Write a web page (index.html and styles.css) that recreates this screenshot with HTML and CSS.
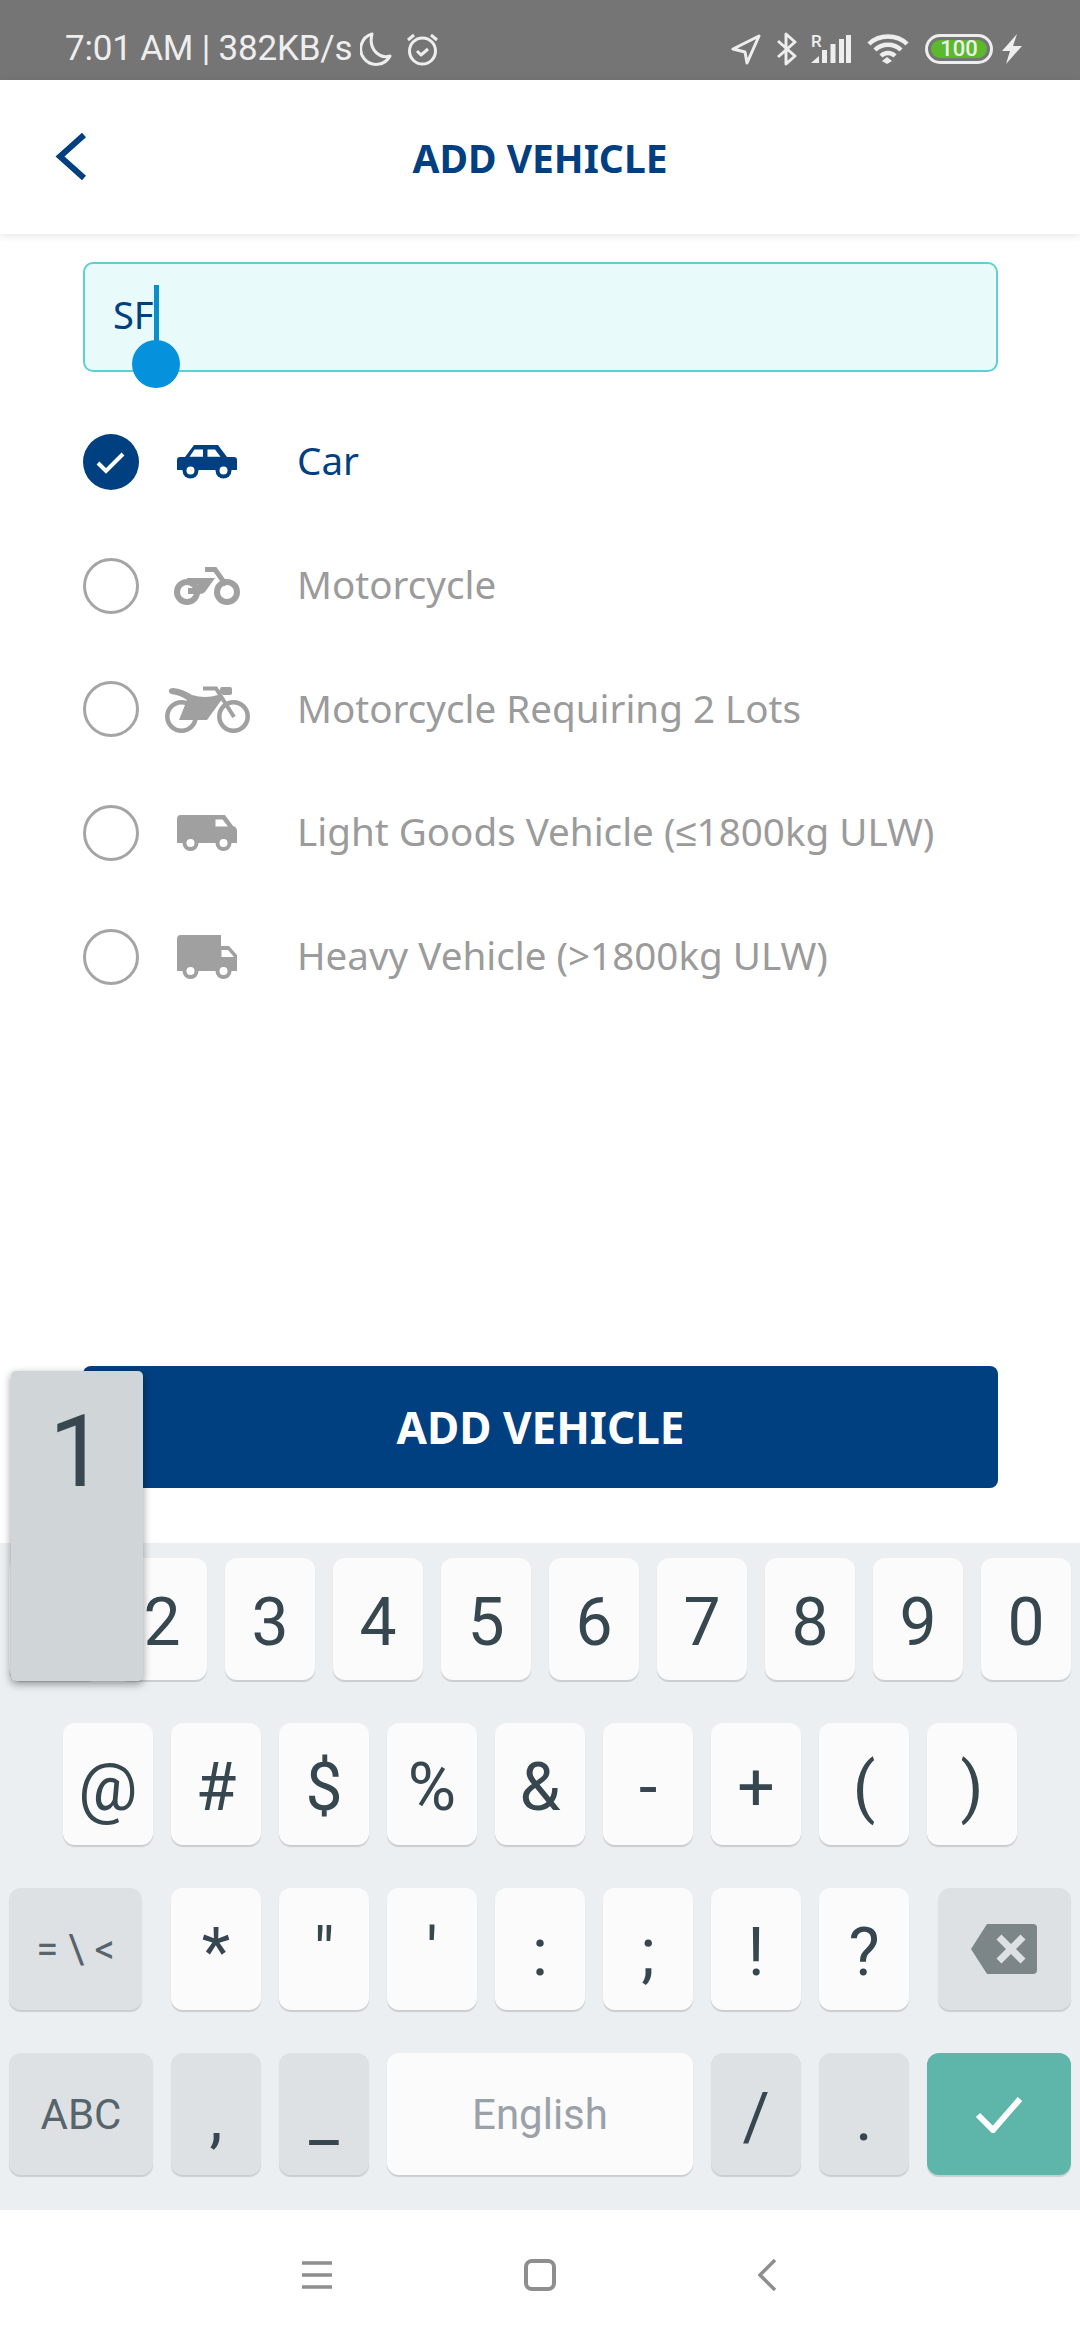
FILE: index.html
```html
<!DOCTYPE html>
<html lang="en">
<head>
    <meta charset="UTF-8">
    <meta name="viewport" content="width=device-width, initial-scale=1.0">
    <title>Add Vehicle</title>
    <link rel="stylesheet" href="styles.css">
</head>
<body>
<div class="app">
    <!-- Status bar -->
    <div class="status-bar">
        <div class="status-left">
            <span class="status-text">7:01 AM | 382KB/s</span>
            <svg class="ic-moon" viewBox="0 0 32 34"><path d="M12 2A15.500 15.500 0 1 0 30 24C20 27 8 18 12 2Z"/></svg>
            <svg class="ic-alarm" viewBox="0 0 33 34"><circle cx="16.500" cy="19" r="13"/><path d="M11 19l4 4 7-6M2 8l6-5M31 8l-6-5"/></svg>
        </div>
        <div class="status-right">
            <svg class="ic-location" viewBox="0 0 30 31"><path d="M28 2L2 15l12 3 2 11Z"/></svg>
            <svg class="ic-bt" viewBox="0 0 21 34"><path d="M2 9l17 15-9 8V2l9 8L2 25"/></svg>
            <svg class="ic-signal" viewBox="0 0 40 30">
                <text x="0" y="13" class="roam">R</text>
                <path d="M0 29L8 22V29ZM11 16h5V29h-5ZM19.500 10h5V29h-5ZM28 5h5V29h-5ZM35 1h5V29h-5Z"/>
            </svg>
            <svg class="ic-wifi" viewBox="0 0 42 32">
                <path class="arc" d="M2 11C12 1 30 1 40 11M8 17C15 10 27 10 34 17M14 23C18 19 24 19 28 23"/>
                <path d="M20 24l-5 4 5 3 5-3Z"/>
            </svg>
            <div class="battery"><span class="battery-level">100</span></div>
            <svg class="ic-bolt" viewBox="0 0 20 30"><path d="M15 0L0 17h8L4 30 20 12h-9Z"/></svg>
        </div>
    </div>

    <!-- Header -->
    <header class="top-bar">
        <svg class="back" viewBox="0 0 32 50"><path d="M29 3L5 24.500 29 46"/></svg>
        <h1>ADD VEHICLE</h1>
    </header>

    <!-- Form -->
    <main class="content">
        <div class="plate-input">
            <span>SF</span><span class="caret"><i class="caret-handle"></i></span>
        </div>

        <ul class="vehicle-list">
            <li class="vehicle selected">
                <span class="radio">
                    <svg viewBox="0 0 56 56"><path d="M15 29l8 8 17-17"/></svg>
                </span>
                <span class="vehicle-icon">
                    <svg class="car" viewBox="0 0 60 34">
                        <path d="M17 0H41L50 12H57Q60 12 60 15V25H0V15Q0 12 3 12H8Z"/>
                        <path class="hole" d="M12.500 11.700L17.500 4.500H26V11.700ZM30.500 4.500H38L43.500 11.700H30.500Z"/>
                        <circle cx="13.500" cy="25.500" r="8"/><circle cx="46.500" cy="25.500" r="8"/>
                        <circle class="hole" cx="13.500" cy="25.500" r="4"/><circle class="hole" cx="46.500" cy="25.500" r="4"/>
                    </svg>
                </span>
                <span class="vehicle-name">Car</span>
            </li>
            <li class="vehicle">
                <span class="radio"></span>
                <span class="vehicle-icon">
                    <svg class="bike" viewBox="0 0 66 38">
                        <circle class="ring" cx="13" cy="25" r="10"/><circle class="ring" cx="53" cy="25" r="10"/>
                        <path d="M13 11H41L31 25Q29 27 26 27H14V21H22L24 17H13Z"/>
                        <path class="line" d="M31 2.500H41L52 18"/>
                    </svg>
                </span>
                <span class="vehicle-name">Motorcycle</span>
            </li>
            <li class="vehicle">
                <span class="radio"></span>
                <span class="vehicle-icon">
                    <svg class="bike-big" viewBox="0 0 85 47">
                        <circle class="ring-thin" cx="16.500" cy="30.500" r="14.200"/><circle class="ring-thin" cx="68.500" cy="30.500" r="14.200"/>
                        <path d="M8 2Q18 3 27 9Q40 13 53 9L58 12L42 34H14L22 14Q15 9 6 8Q3 6 4 4Q5 2 8 2Z"/>
                        <path class="line-thin" d="M38 2.500H51L69 31"/>
                        <path d="M56 1H65Q67 1 67 3V7Q67 9 64 9H58L54 5Z"/>
                    </svg>
                </span>
                <span class="vehicle-name">Motorcycle Requiring 2 Lots</span>
            </li>
            <li class="vehicle">
                <span class="radio"></span>
                <span class="vehicle-icon">
                    <svg class="van" viewBox="0 0 60 36">
                        <path d="M4 0H48L56 11Q60 12 60 16V28H0V4Q0 0 4 0Z"/>
                        <path class="hole" d="M38.500 4.500H45.500L51 11.500H38.500Z"/>
                        <circle cx="13.500" cy="28" r="8"/><circle cx="46.500" cy="28" r="8"/>
                        <circle class="hole" cx="13.500" cy="28" r="4"/><circle class="hole" cx="46.500" cy="28" r="4"/>
                    </svg>
                </span>
                <span class="vehicle-name">Light Goods Vehicle (≤1800kg ULW)</span>
            </li>
            <li class="vehicle">
                <span class="radio"></span>
                <span class="vehicle-icon">
                    <svg class="truck" viewBox="0 0 60 44">
                        <path d="M4 0H44V11H52L60 20V36H0V4Q0 0 4 0Z"/>
                        <path class="hole" d="M44.500 15H51L57 22H44.500Z"/>
                        <circle cx="13.500" cy="36" r="8"/><circle cx="46.500" cy="36" r="8"/>
                        <circle class="hole" cx="13.500" cy="36" r="4"/><circle class="hole" cx="46.500" cy="36" r="4"/>
                    </svg>
                </span>
                <span class="vehicle-name">Heavy Vehicle (&gt;1800kg ULW)</span>
            </li>
        </ul>

        <button class="add-btn" type="button">ADD VEHICLE</button>
    </main>

    <!-- Keyboard -->
    <section class="keyboard">
        <div class="key-row">
            <span class="key">1</span><span class="key">2</span><span class="key">3</span><span class="key">4</span><span class="key">5</span><span class="key">6</span><span class="key">7</span><span class="key">8</span><span class="key">9</span><span class="key">0</span>
        </div>
        <div class="key-row">
            <span class="key">@</span><span class="key">#</span><span class="key">$</span><span class="key">%</span><span class="key">&amp;</span><span class="key">-</span><span class="key">+</span><span class="key">(</span><span class="key">)</span>
        </div>
        <div class="key-row row-three">
            <span class="key fn fn-more">= \ &lt;</span>
            <span class="key">*</span><span class="key">"</span><span class="key">'</span><span class="key">:</span><span class="key">;</span><span class="key">!</span><span class="key">?</span>
            <span class="key fn fn-del">
                <svg viewBox="0 0 66 50"><path d="M16 0H62Q66 0 66 4V46Q66 50 62 50H16L0 25Z"/><path class="del-x" d="M28 13L52 37M52 13L28 37"/></svg>
            </span>
        </div>
        <div class="key-row">
            <span class="key fn fn-abc">ABC</span>
            <span class="key fn">,</span><span class="key fn">_</span>
            <span class="key key-space">English</span>
            <span class="key fn">/</span><span class="key fn">.</span>
            <span class="key key-ok">
                <svg viewBox="0 0 48 38"><path d="M3 20l15 15L45 4"/></svg>
            </span>
        </div>
    </section>

    <!-- Nav bar -->
    <nav class="nav-bar">
        <span class="nav-slot"><svg class="nav-menu" viewBox="0 0 30 28"><path d="M0 2H30M0 14H30M0 26H30"/></svg></span>
        <span class="nav-slot"><span class="nav-home"></span></span>
        <span class="nav-slot"><svg class="nav-back" viewBox="0 0 18 32"><path d="M17 1L2 16 17 31"/></svg></span>
    </nav>

    <!-- Key press popup -->
    <div class="key-popup">1</div>
</div>
</body>
</html>
```

FILE: styles.css
```css
/* Basic reset */
* {
    margin: 0;
    padding: 0;
    box-sizing: border-box;
}

body {
    font-family: "Noto Sans", sans-serif;
    background-color: #fff;
}

.app {
    position: relative;
    width: 1080px;
    height: 2340px;
    display: flex;
    flex-direction: column;
    overflow: hidden;
}

/* Status bar */
.status-bar {
    height: 80px;
    flex: none;
    background-color: #757575;
    display: flex;
    justify-content: space-between;
    align-items: flex-end;
    padding: 0 58px 14px 65px;
    color: #eee;
}

.status-left,
.status-right {
    display: flex;
    align-items: center;
}

.status-text {
    font-family: Roboto, sans-serif;
    font-size: 35px;
    line-height: 34px;
    letter-spacing: -0.2px;
    white-space: nowrap;
}

.status-bar svg {
    fill: none;
    stroke: #eee;
    stroke-width: 3;
    stroke-linejoin: round;
}

.ic-moon {
    width: 32px;
    height: 34px;
    margin-left: 8px;
}

.ic-alarm {
    width: 33px;
    height: 34px;
    margin-left: 14px;
}

.status-right svg {
    display: block;
}

.ic-location {
    width: 30px;
    height: 31px;
}

.ic-bt {
    width: 21px;
    height: 34px;
    margin-left: 15px;
}

.status-bar .ic-signal {
    width: 40px;
    height: 30px;
    margin-left: 14px;
    fill: #eee;
    stroke: none;
}

.roam {
    font-family: Roboto, sans-serif;
    font-size: 17px;
    font-weight: 500;
}

.status-bar .ic-wifi {
    width: 42px;
    height: 32px;
    margin-left: 16px;
    fill: #eee;
    stroke: none;
}

.status-bar .ic-wifi .arc {
    fill: none;
    stroke: #eee;
    stroke-width: 4.500;
}

.battery {
    width: 68px;
    height: 30px;
    margin-left: 16px;
    border: 3px solid #eee;
    border-radius: 15px;
    padding: 3px;
    display: flex;
}

.battery-level {
    flex: 1;
    background-color: #5cb82d;
    border-radius: 9px;
    font-family: Roboto, sans-serif;
    font-size: 22px;
    font-weight: 500;
    line-height: 18px;
    text-align: center;
}

.status-bar .ic-bolt {
    width: 20px;
    height: 30px;
    margin-left: 9px;
    fill: #eee;
    stroke: none;
}

/* Header */
.top-bar {
    position: relative;
    z-index: 1;
    height: 154px;
    flex: none;
    background-color: #fff;
    box-shadow: 0 2px 8px rgba(0, 0, 0, 0.1);
    display: flex;
    align-items: center;
    justify-content: center;
}

.top-bar h1 {
    font-size: 39px;
    font-weight: 700;
    color: #014080;
}

.back {
    position: absolute;
    left: 55px;
    top: 52px;
    width: 32px;
    height: 50px;
    fill: none;
    stroke: #014080;
    stroke-width: 6;
}

/* Form */
.content {
    flex: 1;
    display: flex;
    flex-direction: column;
    padding: 28px 82px 55px 83px;
}

.plate-input {
    height: 110px;
    flex: none;
    background-color: #e8fafa;
    border: 2px solid #5fcfd2;
    border-radius: 10px;
    padding: 0 0 7px 28px;
    display: flex;
    align-items: center;
    font-size: 38px;
    color: #014080;
}

.caret {
    position: relative;
    width: 5px;
    height: 60px;
    margin-top: 3px;
    background-color: #0a8fc9;
}

.caret-handle {
    position: absolute;
    left: -22px;
    top: 55px;
    width: 48px;
    height: 48px;
    border-radius: 50%;
    background-color: #0591db;
}

.vehicle-list {
    list-style-type: none;
    margin-top: 28px;
}

.vehicle {
    height: 123.7px;
    display: flex;
    align-items: center;
    font-size: 38.6px;
    color: #9b9b9b;
}

.vehicle-name {
    padding-bottom: 3px;
}

.vehicle.selected {
    color: #014080;
}

.radio {
    width: 56px;
    height: 56px;
    flex: none;
    border: 3px solid #a5a5a5;
    border-radius: 50%;
}

.selected .radio {
    border: none;
    background-color: #014080;
}

.radio svg {
    display: block;
    fill: none;
    stroke: #fff;
    stroke-width: 4;
}

.vehicle-icon {
    width: 136px;
    margin-right: 22px;
    flex: none;
    display: flex;
    justify-content: center;
    color: #a0a0a0;
}

.selected .vehicle-icon {
    color: #014080;
}

.vehicle-icon svg {
    fill: currentColor;
}

.vehicle-icon .hole {
    fill: #fff;
}

.vehicle-icon .ring,
.vehicle-icon .ring-thin,
.vehicle-icon .line,
.vehicle-icon .line-thin {
    fill: none;
    stroke: currentColor;
}

.vehicle-icon .ring {
    stroke-width: 6;
}

.vehicle-icon .line {
    stroke-width: 5;
}

.vehicle-icon .ring-thin {
    stroke-width: 4.500;
}

.vehicle-icon .line-thin {
    stroke-width: 4;
}

.car {
    width: 60px;
    height: 34px;
}

.bike {
    width: 66px;
    height: 38px;
}

.bike-big {
    width: 85px;
    height: 47px;
}

.van {
    width: 60px;
    height: 36px;
}

.truck {
    width: 60px;
    height: 44px;
}

.add-btn {
    margin-top: auto;
    height: 122px;
    flex: none;
    border: none;
    border-radius: 8px;
    background-color: #014080;
    color: #fff;
    font-family: "Noto Sans", sans-serif;
    font-size: 44px;
    font-weight: 700;
}

/* Keyboard */
.keyboard {
    height: 667px;
    flex: none;
    background-color: #ebeff2;
    padding-top: 15px;
    display: flex;
    flex-direction: column;
    gap: 43px;
}

.key-row {
    display: flex;
    justify-content: center;
    gap: 18px;
}

.key {
    width: 90px;
    height: 122px;
    flex: none;
    background-color: #fbfbfb;
    border-radius: 12px;
    box-shadow: 0 2px 1px rgba(0, 0, 0, 0.14);
    display: flex;
    align-items: center;
    justify-content: center;
    padding-top: 8px;
    font-family: Roboto, sans-serif;
    font-size: 66px;
    line-height: 1;
    color: #37474f;
}

.key.fn {
    background-color: #dee1e4;
}

.row-three .fn-more {
    width: 133px;
    margin-right: 11px;
    padding-top: 2px;
    font-size: 40px;
    color: #56646c;
}

.row-three .fn-del {
    width: 133px;
    margin-left: 11px;
    padding: 0;
}

.fn-del svg {
    width: 66px;
    height: 50px;
    margin-left: -1px;
    fill: #7c8689;
}

.fn-del .del-x {
    fill: none;
    stroke: #dee1e4;
    stroke-width: 7;
}

.key.fn-abc {
    width: 144px;
    padding-top: 2px;
    font-size: 42px;
    color: #56646c;
}

.key-space {
    width: 306px;
    padding-top: 2px;
    font-size: 42px;
    color: #9aa1a8;
}

.key-ok {
    width: 144px;
    padding: 0;
    background-color: #5eb5aa;
}

.key-ok svg {
    width: 48px;
    height: 38px;
    fill: none;
    stroke: #fff;
    stroke-width: 6;
}

/* Key press popup */
.key-popup {
    position: absolute;
    left: 11px;
    top: 1371px;
    width: 132px;
    height: 310px;
    background-color: #d0d5d8;
    border-radius: 5px;
    box-shadow: 0 3px 8px rgba(0, 0, 0, 0.4);
    padding-top: 31px;
    text-align: center;
    font-family: Roboto, sans-serif;
    font-size: 100px;
    font-weight: 400;
    line-height: 100px;
    color: #37474f;
}

/* Nav bar */
.nav-bar {
    height: 130px;
    flex: none;
    background-color: #fff;
    display: flex;
    justify-content: center;
    align-items: center;
}

.nav-slot {
    width: 227px;
    display: flex;
    justify-content: center;
}

.nav-slot svg {
    display: block;
    fill: none;
    stroke: #8e8e8e;
    stroke-width: 3.500;
}

.nav-menu {
    width: 30px;
    height: 28px;
    margin-left: 8px;
}

.nav-home {
    width: 32px;
    height: 32px;
    border: 4px solid #8e8e8e;
    border-radius: 8px;
}

.nav-back {
    width: 18px;
    height: 32px;
}
```
